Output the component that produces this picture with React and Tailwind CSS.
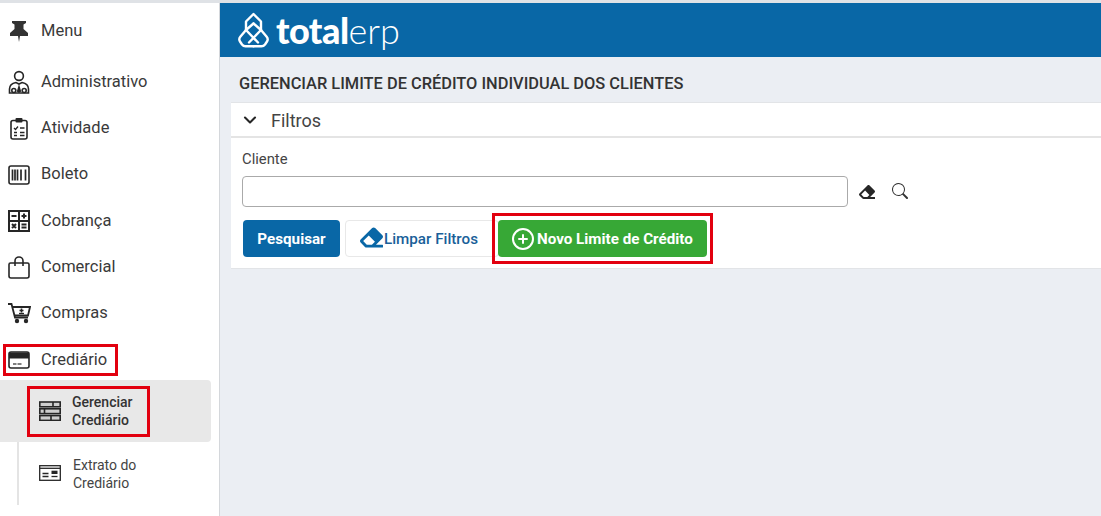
import React from "react";
import { BsSearch } from "react-icons/bs";
import { FaEraser } from "react-icons/fa";
import { ChevronDown, CirclePlus } from "lucide-react";

const S = { fill: "none", stroke: "#262626", strokeWidth: 1.6 };

const PinIcon = () => (
  <svg width="20" height="22" viewBox="0 0 20 22">
    <path d="M3 1h14v2l-2.500 1.500V9l4.500 4v3h-8l-1 6-1-6H1v-3l4.500-4V4.500L3 3z" fill="#333" />
  </svg>
);
const AdminIcon = () => (
  <svg width="22" height="24" viewBox="0 0 22 24">
    <circle cx="11" cy="6" r="4.400" {...S} />
    <path d="M1.500 23v-4c0-4 3-5.800 6.500-6.500l3 1.500 3-1.500c3.500.7 6.500 2.500 6.500 6.500v4z" {...S} />
    <path d="M11 14l-2.200 7.500L11 23l2.200-1.500z" fill="#262626" />
    <circle cx="5.800" cy="20.500" r="2" {...S} strokeWidth="1.600" />
    <circle cx="16.200" cy="20.500" r="2" {...S} strokeWidth="1.600" />
  </svg>
);
const ActivityIcon = () => (
  <svg width="18" height="23" viewBox="0 0 18 23">
    <rect x="1" y="3.500" width="16" height="18.500" rx="2" {...S} />
    <rect x="5.500" y="1" width="7" height="4.500" rx="1" fill="#262626" />
    <path d="M4 11l1.500 1.500L8 9.500M10 11h4.500M4 15.500h3M10 15.500h4.500M4 18.500h3M10 18.500h4.500" {...S} strokeWidth="1.300" />
  </svg>
);
const BarcodeIcon = () => (
  <svg width="22" height="20" viewBox="0 0 22 20">
    <rect x="1" y="1" width="20" height="18" rx="2" {...S} />
    <path d="M4.500 4.500v11M7 4.500v11M9.500 4.500v11M13 4.500v11M17.500 4.500v11" stroke="#262626" strokeWidth="1.700" />
  </svg>
);
const CalcIcon = () => (
  <svg width="22" height="22" viewBox="0 0 22 22">
    <rect x="1" y="1" width="20" height="20" {...S} strokeWidth="2" />
    <path d="M11 1v20M1 11h20" stroke="#262626" strokeWidth="2" />
    <path d="M3.500 6h5M13.500 6h5M16 3.500v5M13.500 14.500h5M13.500 17.500h5M4 14l4 4M8 14l-4 4" stroke="#262626" strokeWidth="2" />
  </svg>
);
const BagIcon = () => (
  <svg width="22" height="23" viewBox="0 0 22 23">
    <path d="M2.500 7h17a1.500 1.500 0 0 1 1.500 1.500V20a2 2 0 0 1-2 2H3a2 2 0 0 1-2-2V8.500A1.500 1.500 0 0 1 2.500 7z" {...S} />
    <path d="M7 10V5a4 4 0 0 1 8 0v5" {...S} />
  </svg>
);
const CartIcon = () => (
  <svg width="23" height="21" viewBox="0 0 23 21">
    <path d="M0 1h3.500l3.500 13.500h13" {...S} strokeWidth="1.800" />
    <path d="M4.500 4h17.500l-2 8.500H7" {...S} strokeWidth="1.800" />
    <path d="M13.500 5.500v4M11.500 7.500h4" stroke="#262626" strokeWidth="1.600" fill="none" />
    <path d="M11 10.500h5" stroke="#262626" strokeWidth="1.300" fill="none" />
    <circle cx="9" cy="18" r="2.200" fill="#262626" />
    <circle cx="18" cy="18" r="2.200" fill="#262626" />
  </svg>
);
const CardIcon = () => (
  <svg width="22" height="18" viewBox="0 0 22 18">
    <rect x="1" y="1" width="20" height="16" rx="2" {...S} />
    <rect x="1" y="1.500" width="20" height="6" fill="#262626" />
    <path d="M5 13h3.500M9.500 13h4" stroke="#555" strokeWidth="1.300" />
  </svg>
);
const TableIcon = () => (
  <svg width="22" height="20" viewBox="0 0 22 20">
    <rect x="0.800" y="1" width="20.400" height="4.800" fill="#cfcfcf" stroke="#262626" strokeWidth="1.600" />
    <rect x="0.800" y="7.800" width="20.400" height="4.800" fill="#cfcfcf" stroke="#262626" strokeWidth="1.600" />
    <rect x="0.800" y="14.600" width="20.400" height="4.800" fill="#cfcfcf" stroke="#262626" strokeWidth="1.600" />
    <path d="M14 1v4.800M5.500 7.800v4.800M12 14.600v4.800" stroke="#262626" strokeWidth="1.600" />
  </svg>
);
const StatementIcon = () => (
  <svg width="22" height="16" viewBox="0 0 22 16">
    <rect x="0.700" y="0.700" width="20.600" height="14.600" {...S} strokeWidth="1.300" />
    <path d="M1 3.300h20" stroke="#262626" strokeWidth="1.300" />
    <path d="M3.500 8.500h6M3.500 11.500h6" stroke="#262626" strokeWidth="1.300" />
    <rect x="12.500" y="5.700" width="6" height="3.300" fill="#262626" />
    <path d="M12.500 11.500h6" stroke="#262626" strokeWidth="1.300" />
  </svg>
);
const LogoMark = () => (
  <svg width="31" height="36" viewBox="0 0 31 36" fill="none" stroke="#fff" strokeWidth="2.400" strokeLinejoin="round" strokeLinecap="round">
    <path d="M8 18V9.500L15.500 2 23 9.500V18" />
    <path d="M15.500 11.500 8 18 2.500 24.500c-1.500 1.800-1.500 3.500-.5 5l2 3c1 1.300 2 1.800 3.500 1.800h8" />
    <path d="M15.500 11.500 23 18l5.500 6.500c1.500 1.800 1.500 3.500.5 5l-2 3c-1 1.300-2 1.800-3.500 1.800h-8" />
    <path d="M8 18 20 30.500M23 18 11 30.500" />
  </svg>
);

const items = [
  ["Administrativo", <AdminIcon />],
  ["Atividade", <ActivityIcon />],
  ["Boleto", <BarcodeIcon />],
  ["Cobrança", <CalcIcon />],
  ["Comercial", <BagIcon />],
  ["Compras", <CartIcon />],
];

function NavItem({ label, icon, children }) {
  return (
    <div className="relative flex h-[46.300px] items-center text-[16.500px] text-[#3a3a3a]">
      <span className="flex w-[41px] shrink-0 justify-center pr-[3px]">{icon}</span>
      <span>{label}</span>
      {children}
    </div>
  );
}

const RedBox = ({ className }) => (
  <div className={`pointer-events-none absolute border-[3px] border-[#e2000f] ${className}`} />
);

export default function App() {
  return (
    <div className="flex h-[516px] w-[1101px] flex-col overflow-hidden bg-[#dfe2e6] pt-[3px] font-['Roboto',sans-serif]">
      <div className="flex min-h-0 flex-1">
        <aside className="w-[219px] shrink-0 bg-white">
          <div className="flex h-[56px] items-center text-[16.500px] text-[#3a3a3a]">
            <span className="flex w-[37px] shrink-0 justify-center">
              <PinIcon />
            </span>
            <span className="ml-[4px]">Menu</span>
          </div>
          {items.map(([l, i]) => (
            <NavItem key={l} label={l} icon={i} />
          ))}
          <NavItem label="Crediário" icon={<CardIcon />}>
            <RedBox className="left-[3px] top-[7.200px] h-[32px] w-[115px]" />
          </NavItem>
          <div className="relative mr-[8px] mt-[-3.100px] flex h-[62px] items-center rounded-r-[4px] bg-[#e8e8e8] text-[14px] font-medium leading-[18px] text-[#333]">
            <span className="ml-[39px] mr-[11px] flex shrink-0">
              <TableIcon />
            </span>
            <span className="pt-[1px]">
              Gerenciar
              <br />
              Crediário
            </span>
            <RedBox className="left-[27px] top-[6px] h-[51px] w-[123px]" />
          </div>
          <div className="ml-[17px] mr-[8px] flex h-[63px] items-center border-l-2 border-[#e4e4e4] text-[14px] leading-[18px] text-[#444]">
            <span className="ml-[20px] mr-[12px] flex shrink-0">
              <StatementIcon />
            </span>
            <span className="pt-[2px]">
              Extrato do
              <br />
              Crediário
            </span>
          </div>
        </aside>
        <main className="flex min-w-0 flex-1 flex-col border-l border-[#d4d7db] bg-[#ebeef3]">
          <header className="flex h-[54px] shrink-0 items-center bg-[#0967a6] pb-[1px] pl-[18px] text-white">
            <LogoMark />
            <span className="ml-[7px] font-['Lato',sans-serif] text-[36px] font-black leading-none tracking-[-0.5px]">total</span>
            <span className="font-['Lato',sans-serif] text-[36px] font-light leading-none">erp</span>
          </header>
          <h1 className="ml-[19px] mt-[17px] h-[28px] text-[16.400px] font-medium leading-5 text-[#333]">
            GERENCIAR LIMITE DE CRÉDITO INDIVIDUAL DOS CLIENTES
          </h1>
          <section className="ml-[11px] h-[167px] border-y border-[#e2e4e7] bg-white">
            <div className="flex h-[35px] items-center border-b-2 border-[#e4e4e4] pl-[9px] pt-[1px] text-[18px] text-[#444]">
              <ChevronDown size={20} strokeWidth={2.500} color="#262626" />
              <span className="ml-[11px]">Filtros</span>
            </div>
            <div className="pl-[11px] pt-[12px]">
              <label className="block text-[14.800px] leading-[18px] text-[#444]">Cliente</label>
              <div className="mt-[8px] flex items-center">
                <div className="h-[31px] w-[606px] rounded-[4px] border border-[#aaaaaa] bg-white" />
                <FaEraser size={16} color="#262626" className="ml-[11px]" />
                <BsSearch size={16} color="#333" className="ml-[17px] mb-[1px]" />
              </div>
              <div className="relative mt-[13px] flex h-[37px] text-[15.200px] font-bold">
                <button className="ml-[1px] h-full w-[97px] rounded-[4px] bg-[#0967a6] pt-[1px] text-white">Pesquisar</button>
                <button className="ml-[5px] flex h-full w-[154px] items-center rounded-[4px] border border-[#e8e8e8] pl-[14px] pt-[1px] font-medium text-[#1a5f99]">
                  <FaEraser size={23} color="#0967a6" className="mb-[3px]" />
                  <span className="ml-[1px]">Limpar Filtros</span>
                </button>
                <button className="absolute left-[256px] flex h-full w-[209px] items-center rounded-[4px] bg-[#37a836] pl-[13px] pt-[1px] text-white">
                  <CirclePlus size={24} strokeWidth={2} />
                  <span className="ml-[2px]">Novo Limite de Crédito</span>
                </button>
                <RedBox className="left-[250px] top-[-7px] h-[51px] w-[221px]" />
              </div>
            </div>
          </section>
        </main>
      </div>
    </div>
  );
}
